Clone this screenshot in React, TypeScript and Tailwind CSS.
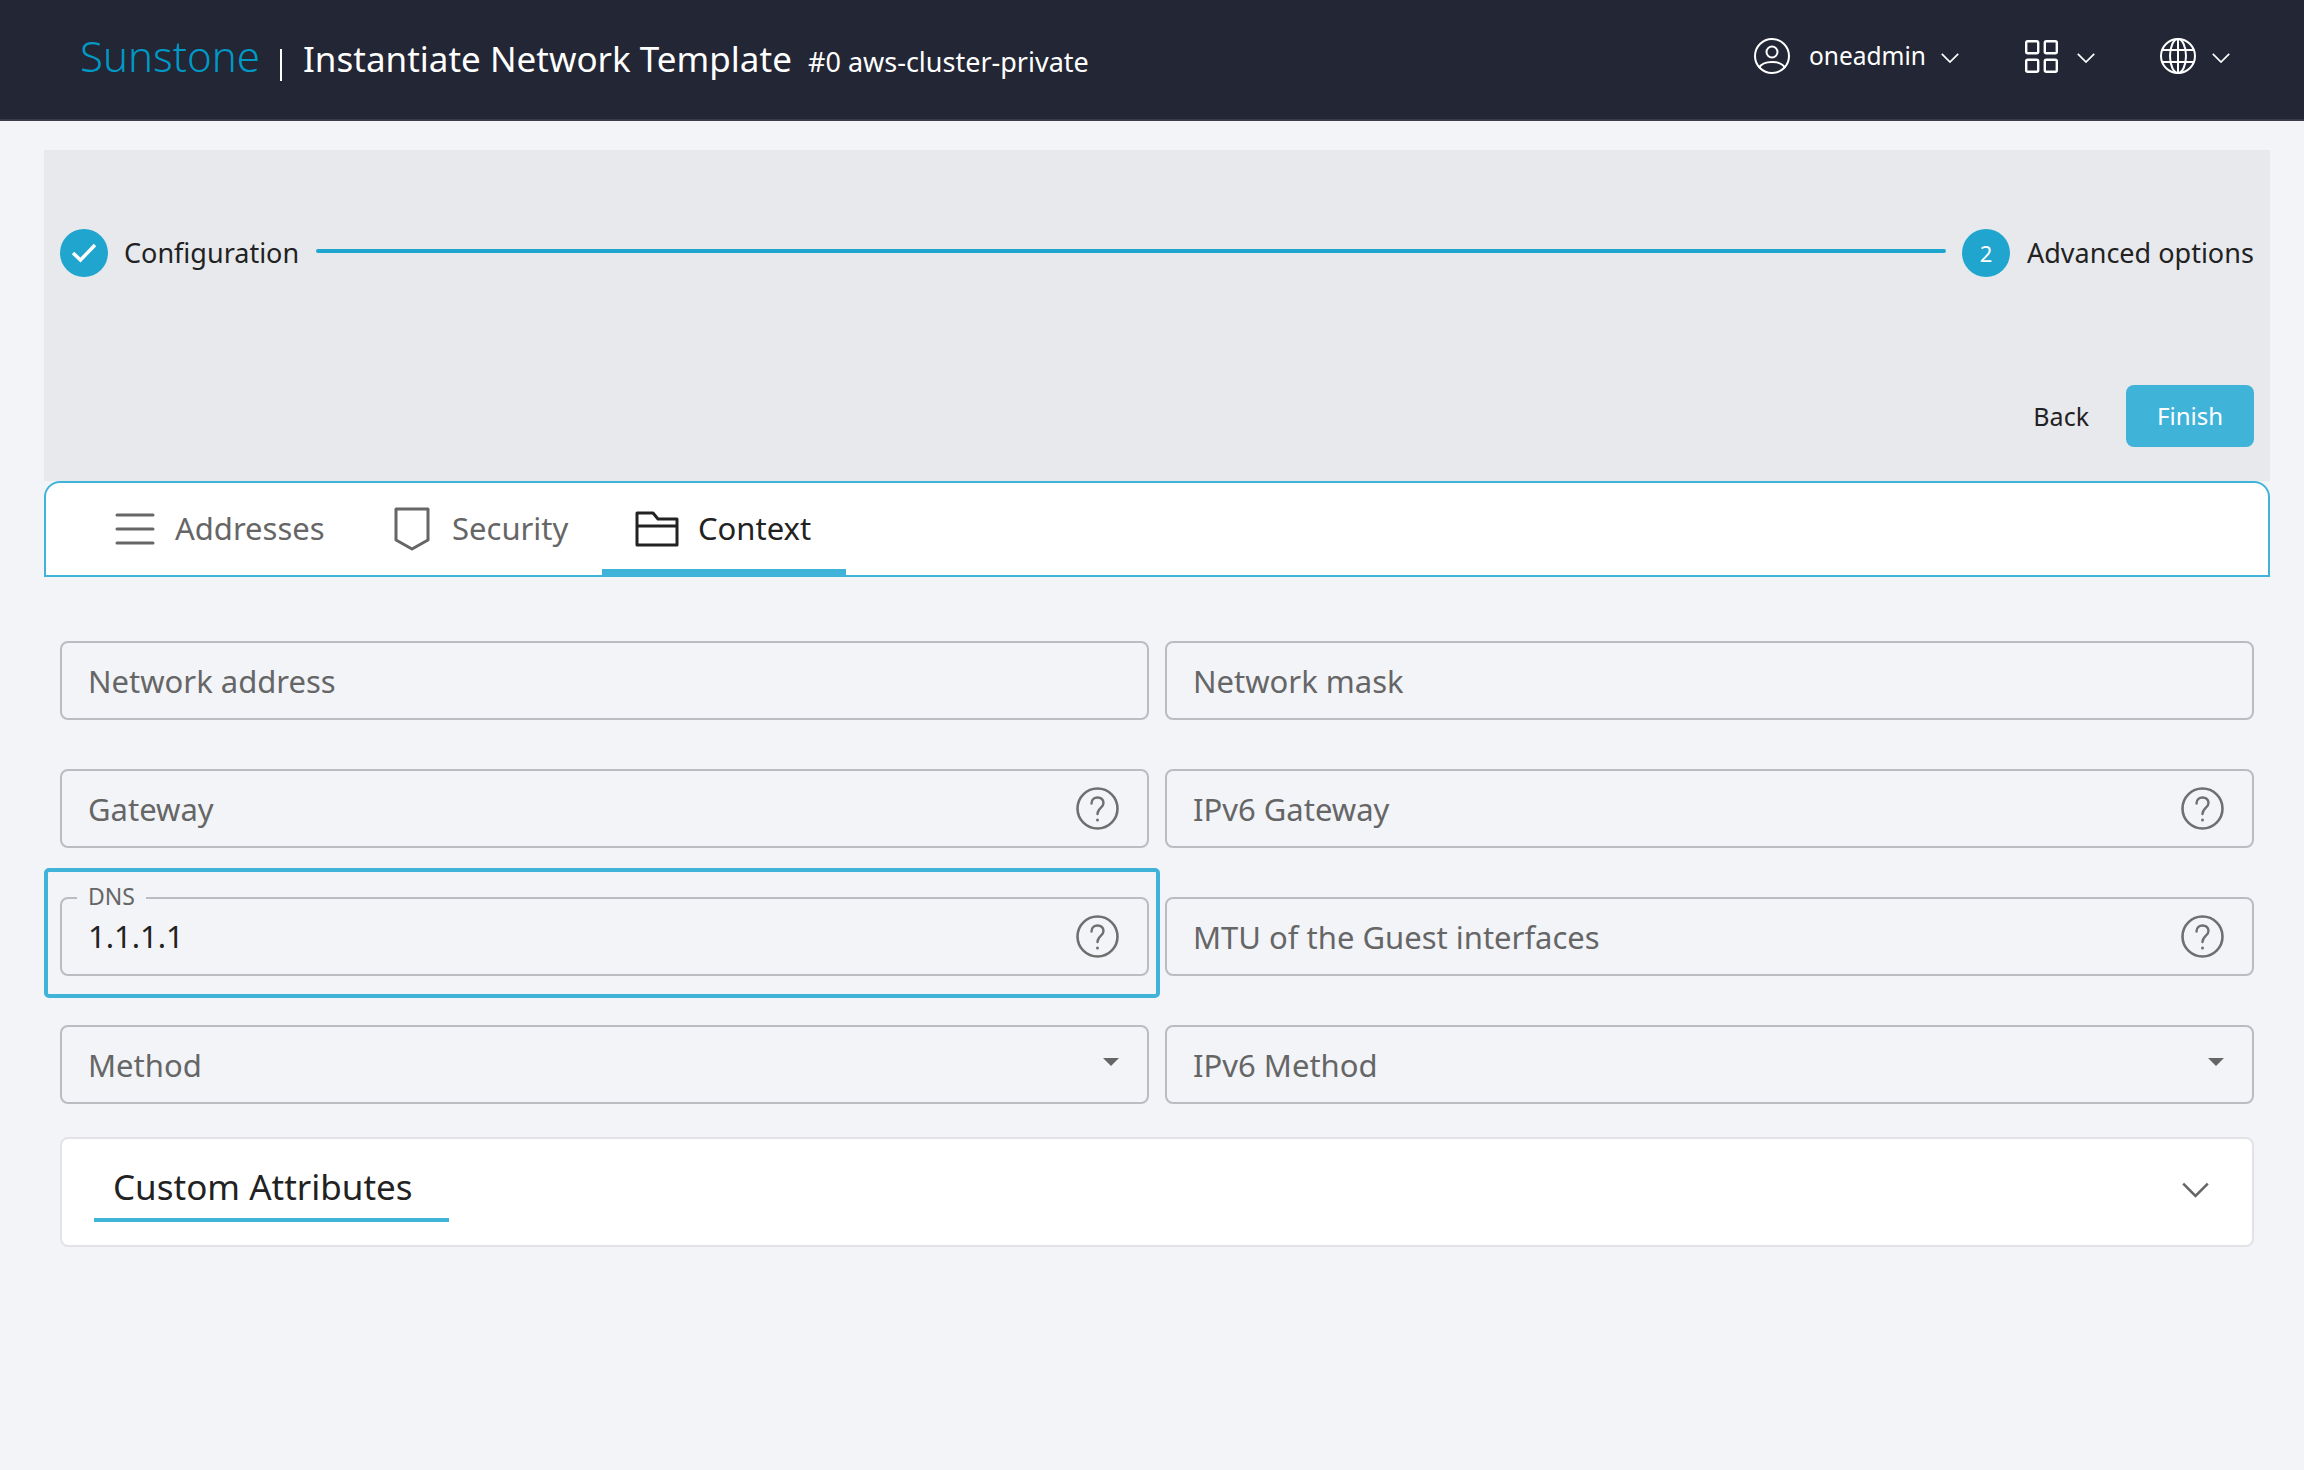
function Chevron({ className }: { className: string }) {
  return (
    <svg viewBox="0 0 18 10" fill="none" stroke="currentColor" strokeWidth="1.7" className={className}>
      <path d="M0.8 0.8 L9 9 L17.2 0.8" />
    </svg>
  );
}

function Help() {
  return (
    <svg viewBox="0 0 43 43" fill="none" className="w-[43px] h-[43px] text-[#6f6f6f]" stroke="currentColor">
      <circle cx="21.5" cy="21.5" r="20" strokeWidth="2.6" />
      <path d="M15.5 16.5 C15.5 8.5 27.5 8.5 27.5 16 C27.5 21 21.5 21 21.5 27" strokeWidth="2.4" strokeLinecap="round" />
      <circle cx="21.5" cy="33" r="1.5" fill="currentColor" stroke="none" />
    </svg>
  );
}

function Field({ label, help, select }: { label: string; help?: boolean; select?: boolean }) {
  return (
    <div className="h-[79px] border-2 border-[#bbbcc1] rounded-[8px] flex items-center pl-[26px] pr-[28px] justify-between">
      <span className="text-[31px] text-[#666666] leading-none mt-[2px] whitespace-nowrap">{label}</span>
      {help && <Help />}
      {select && <span className="w-0 h-0 border-l-[8px] border-r-[8px] border-t-[8px] border-l-transparent border-r-transparent border-t-[#666666] mb-[6px]" />}
    </div>
  );
}

export default function App() {
  return (
    <div className="h-[1470px] overflow-hidden bg-[#f2f4f8] flex flex-col font-['Noto_Sans',sans-serif]">
      <header className="h-[121px] shrink-0 bg-[#232634] border-b-2 border-[#38394a] flex items-center justify-between pl-[80px] pr-[74px] text-white">
        <div className="flex items-baseline mt-[-7px]">
          <span className="text-[42px] font-light text-[#0099c6] leading-none w-[179px]">Sunstone</span>
          <span className="w-[2px] h-[32px] bg-white ml-[21px] mr-[21px] self-end mb-[-4px]" />
          <span className="text-[35px] leading-none w-[505px] whitespace-nowrap">Instantiate Network Template</span>
          <span className="text-[27px] leading-none whitespace-nowrap">#0 aws-cluster-private</span>
        </div>
        <div className="flex items-center mt-[-7px]">
          <svg viewBox="0 0 36 36" fill="none" stroke="currentColor" strokeWidth="2" className="w-[36px] h-[36px]">
            <circle cx="18" cy="18" r="17" />
            <circle cx="18" cy="14" r="5.5" />
            <path d="M5 30 C9 22 27 22 31 30" />
          </svg>
          <span className="text-[24.5px] leading-none ml-[19px] w-[132px]">oneadmin</span>
          <Chevron className="w-[18px] h-[10px] mt-[4px]" />
          <svg viewBox="0 0 33 33" fill="none" stroke="currentColor" strokeWidth="2.4" className="w-[33px] h-[33px] ml-[66px]">
            <rect x="1.2" y="1.2" width="12" height="12" rx="1.5" />
            <rect x="19.8" y="1.2" width="12" height="12" rx="1.5" />
            <rect x="1.2" y="19.8" width="12" height="12" rx="1.5" />
            <rect x="19.8" y="19.8" width="12" height="12" rx="1.5" />
          </svg>
          <Chevron className="w-[18px] h-[10px] ml-[19px] mt-[4px]" />
          <svg viewBox="0 0 36 36" fill="none" stroke="currentColor" strokeWidth="2" className="w-[36px] h-[36px] ml-[65px]">
            <circle cx="18" cy="18" r="17" />
            <ellipse cx="18" cy="18" rx="8" ry="17" />
            <path d="M18 1 V35 M2.5 12 H33.5 M2.5 24 H33.5" />
          </svg>
          <Chevron className="w-[18px] h-[10px] ml-[16px] mt-[4px]" />
        </div>
      </header>

      <main className="pl-[44px] pr-[34px] pt-[29px] flex-1 flex flex-col">
        <section className="h-[331px] shrink-0 bg-[#e8e9ed] px-[16px] pt-[79px] flex flex-col">
          <div className="flex items-center h-[48px]">
            <span className="w-[48px] h-[48px] rounded-full bg-[#20a6ce] flex items-center justify-center shrink-0">
              <svg viewBox="0 0 26 20" fill="none" stroke="white" strokeWidth="3.4" className="w-[26px] h-[20px]">
                <path d="M2 10 L9.5 17 L24 2" />
              </svg>
            </span>
            <span className="ml-[16px] text-[27px] text-[#222222] leading-none w-[176px] mt-[-2px]">Configuration</span>
            <span className="ml-[16px] flex-1 h-[4px] bg-[#20a6ce] rounded-full mt-[-4px]" />
            <span className="ml-[16px] w-[48px] h-[48px] rounded-full bg-[#20a6ce] flex items-center justify-center shrink-0 text-white text-[22px]">2</span>
            <span className="ml-[17px] text-[27px] text-[#222222] leading-none w-[227px] whitespace-nowrap mt-[-2px]">Advanced options</span>
          </div>
          <div className="flex justify-end items-center mt-[108px]">
            <span className="text-[25px] text-[#222222] leading-none mr-[37px]">Back</span>
            <span className="w-[128px] h-[62px] rounded-[8px] bg-[#40b3d9] text-white text-[24px] flex items-center justify-center">Finish</span>
          </div>
        </section>

        <nav className="h-[96px] shrink-0 bg-white border-2 border-[#40b3d9] rounded-t-[16px] flex items-center pl-[69px]">
          <svg viewBox="0 0 40 32" fill="none" stroke="#666666" strokeWidth="3" strokeLinecap="round" className="w-[40px] h-[32px]">
            <path d="M2 2 H38 M2 16 H38 M2 30 H38" />
          </svg>
          <span className="ml-[20px] text-[31px] text-[#666666] leading-none w-[149px] mt-[-2px]">Addresses</span>
          <svg viewBox="0 0 36 44" fill="none" stroke="#666666" strokeWidth="3" strokeLinejoin="round" className="w-[36px] h-[44px] ml-[70px]">
            <path d="M2 2 H34 V33 L18 42 L2 33 Z" />
          </svg>
          <span className="ml-[22px] text-[31px] text-[#666666] leading-none w-[118px] mt-[-2px]">Security</span>
          <div className="ml-[32px] w-[244px] h-[92px] flex items-center pl-[33px] border-b-[6px] border-[#40b3d9] pt-[6px]">
            <svg viewBox="0 0 44 36" fill="none" stroke="#222222" strokeWidth="3" strokeLinejoin="round" className="w-[44px] h-[36px] shrink-0">
              <path d="M2 2 H18 L23 8 H42 V34 H2 Z M2 15 H42" />
            </svg>
            <span className="ml-[19px] text-[31px] text-[#222222] leading-none mt-[-2px]">Context</span>
          </div>
        </nav>

        <div className="mx-[16px] mt-[64px] grid grid-cols-2 gap-x-[16px] gap-y-[49px]">
          <Field label="Network address" />
          <Field label="Network mask" />
          <Field label="Gateway" help />
          <Field label="IPv6 Gateway" help />
          <div className="relative">
            <div className="h-[79px] border-2 border-[#bbbcc1] rounded-[8px] flex items-center pl-[26px] pr-[28px] justify-between">
              <span className="text-[31px] text-[#222222] leading-none">1.1.1.1</span>
              <Help />
            </div>
            <span className="absolute left-[17px] top-[-16px] px-[11px] bg-[#f2f4f8] text-[23px] leading-[30px] text-[#666666]">DNS</span>
            <span className="absolute left-[-16px] right-[-11px] top-[-29px] bottom-[-22px] border-[4px] border-[#40b3d9] rounded-[5px]" />
          </div>
          <Field label="MTU of the Guest interfaces" help />
          <Field label="Method" select />
          <Field label="IPv6 Method" select />
        </div>

        <div className="mx-[16px] mt-[33px] h-[110px] shrink-0 bg-white border-2 border-[#e2e3e6] rounded-[8px] flex items-center justify-between pl-[32px] pr-[43px]">
          <div className="w-[355px] h-[72px] border-b-[4px] border-[#40b3d9] pl-[19px] flex items-center mt-[-12px]">
            <span className="text-[35px] text-[#222222] leading-none mt-[4px]">Custom Attributes</span>
          </div>
          <Chevron className="w-[27px] h-[16px] text-[#666666] mt-[-4px]" />
        </div>
      </main>
    </div>
  );
}
